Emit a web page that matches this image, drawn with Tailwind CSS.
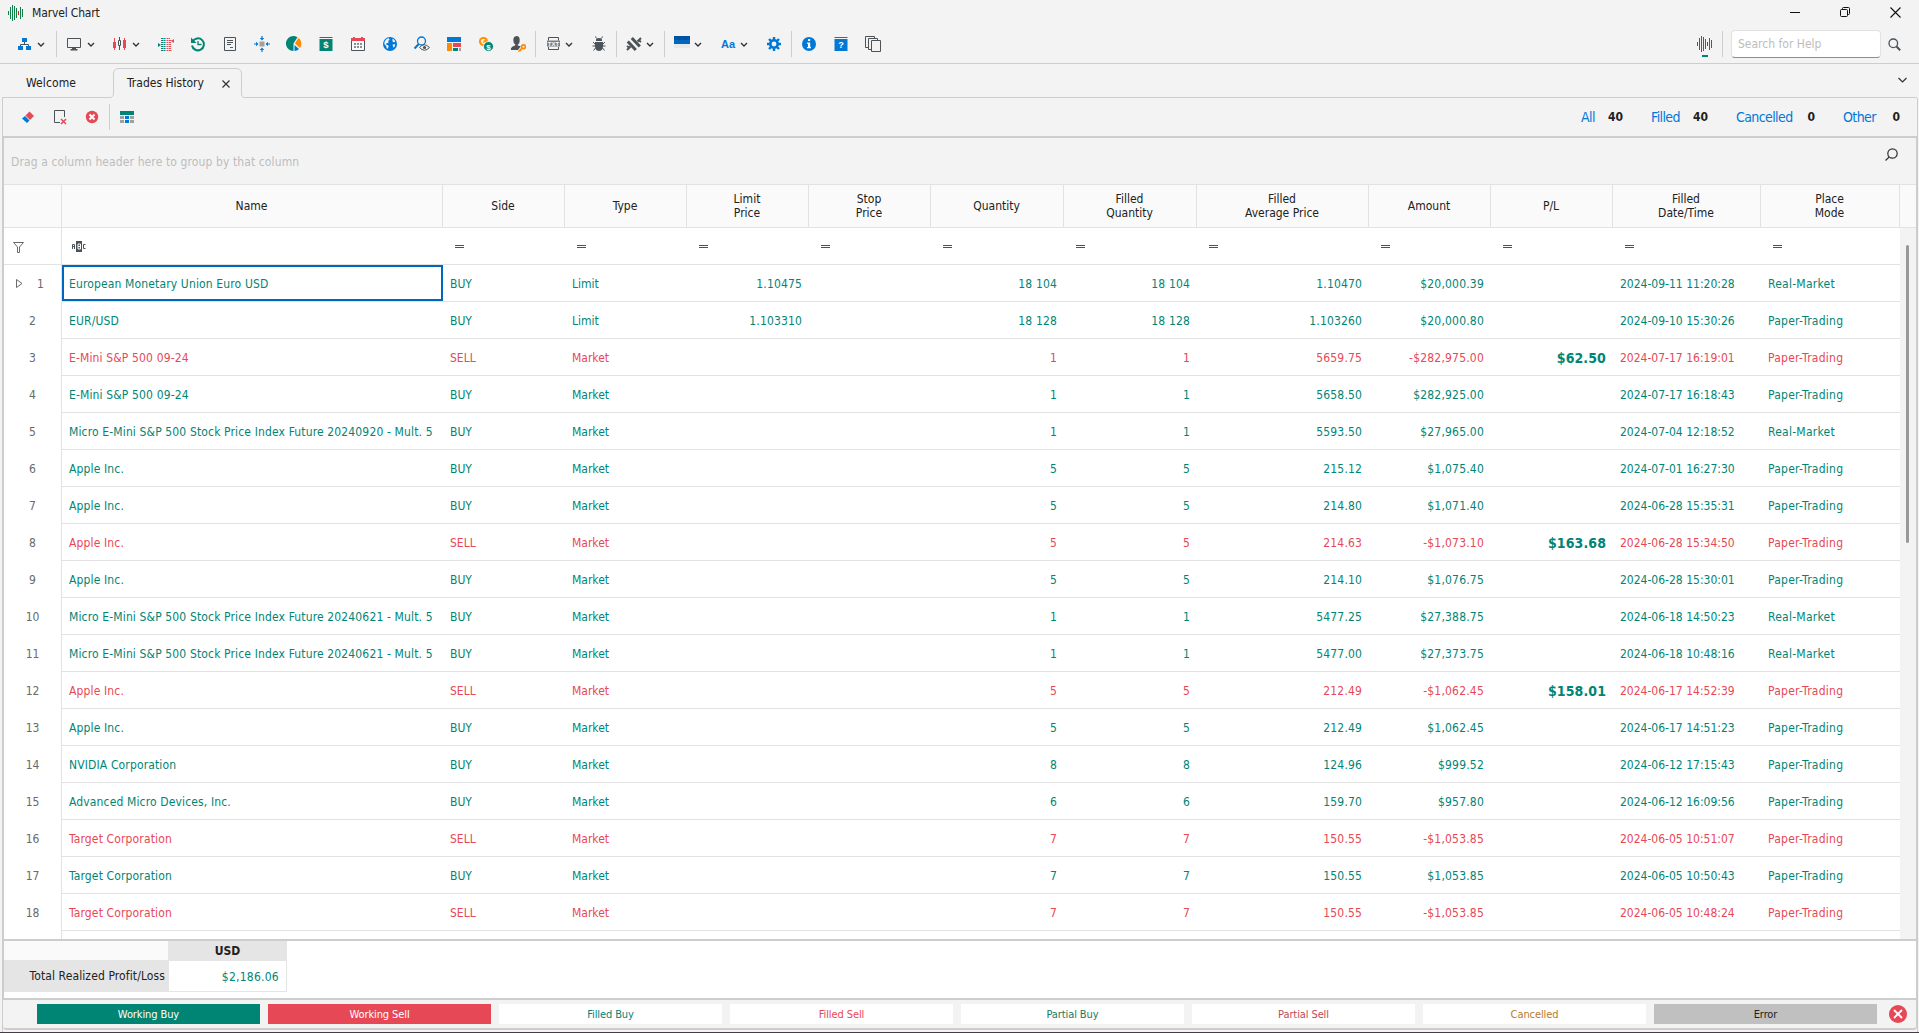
<!DOCTYPE html>
<html lang="en">
<head>
    <meta charset="UTF-8">
    <meta name="viewport" content="width=device-width, initial-scale=1.0">
    <title>Marvel Chart</title>
    <script src="https://cdn.jsdelivr.net/npm/@tailwindcss/browser@4"></script>
</head>
<body class="w-[1919px] h-[1033px] overflow-hidden bg-[#f3f3f3] text-[#212121] text-[12px] font-['DejaVu_Sans_Condensed','Noto_Sans',sans-serif]">
    <!-- Shared icons -->
    <svg class="hidden">
        <symbol id="chev" viewBox="0 0 8 16"><path d="M1 7l3 3 3-3" fill="none" stroke="#333" stroke-width="1.4"/></symbol>
        <symbol id="logo" viewBox="0 0 16 16">
            <path d="M.5 6v4M2.500 2v12M4.500 0v16M6.500 1v14M8.500 3v10M12.500 2v12M14.500 4v8" stroke="#10804a"/>
            <path d="M10.500 6v4" stroke="#c22"/>
        </symbol>
        <symbol id="eq" viewBox="0 0 9 3"><path d="M0 .5h9M0 2.500h9" stroke="#4b5358"/></symbol>
    </svg>

    <div class="flex flex-col h-full">
        <!-- Title bar -->
        <header class="h-[25px] shrink-0 flex items-center pl-2">
            <svg class="w-4 h-4"><use href="#logo"/></svg>
            <h1 class="ml-2 tracking-[-0.15px]">Marvel Chart</h1>
            <div class="ml-auto mr-[18px] flex items-center gap-[39px]">
                <svg class="w-[11px] h-[11px]" viewBox="0 0 11 11"><path d="M0 5.500h10" stroke="#111"/></svg>
                <svg class="w-[11px] h-[11px]" viewBox="0 0 11 11" fill="none" stroke="#111"><rect x=".5" y="2.500" width="7" height="7" rx="1"/><path d="M2.500 2.500V1.500q0-1 1-1h5q1 0 1 1v5q0 1-1 1H8"/></svg>
                <svg class="w-[11px] h-[11px]" viewBox="0 0 11 11"><path d="M.5.5l10 10M10.500.5l-10 10" stroke="#111" stroke-width="1.100"/></svg>
            </div>
        </header>

        <!-- Main toolbar -->
        <div class="h-[39px] shrink-0 flex items-center border-b border-[#cdcdcd] pl-4 pr-[17px] gap-4">
            <div class="flex gap-[5px]">
                <svg class="w-4 h-4" viewBox="0 0 16 16"><path d="M6 2h5v4H6zM2 10h5v4H2zM10 10h5v4h-5z" fill="#0078d7"/><path d="M8.500 6v2M4.500 10V8.500h8V10" fill="none" stroke="#4b5358"/></svg>
                <svg class="w-2 h-4"><use href="#chev"/></svg>
            </div>
            <div class="w-px h-[26px] bg-[#cdcdcd] ml-[-5px] mr-[-7px]"></div>
            <div class="flex gap-[5px]">
                <svg class="w-4 h-4" viewBox="0 0 16 16"><path d="M1.500 2.500h13v9h-13z" fill="none" stroke="#4b5358"/><path d="M6 12h4v1h1.500v1.500h-7V13H6z" fill="#4b5358"/></svg>
                <svg class="w-2 h-4"><use href="#chev"/></svg>
            </div>
            <div class="flex gap-[5px] mr-[2px]">
                <svg class="w-4 h-4" viewBox="0 0 16 16"><path d="M3.500 2v12M13.500 2v12" stroke="#e74856"/><path d="M2 6h3v6H2zM12 4h3v8h-3z" fill="#e74856"/><path d="M8.500 1v3M8.500 10v4M7.500 4.500h2v5h-2z" fill="none" stroke="#4b5358"/></svg>
                <svg class="w-2 h-4"><use href="#chev"/></svg>
            </div>
            <svg class="w-4 h-4" viewBox="0 0 16 16"><path d="M3 2.500h5M3 4.500h5M3 6.500h5M3 8.500h5M3 10.500h5M3 12.500h5M3 14.500h5" stroke="#008575" stroke-dasharray="2 .5"/><path d="M8.500 2.500H12M8.500 4.500H14M8.500 6.500H13M8.500 8.500H13M8.500 10.500H13M8.500 12.500H13M8.500 14.500H14" stroke="#e74856" stroke-dasharray="2 .5"/><path d="M0 7v4l3-2z" fill="#008575"/><path d="M16 3v4l-3-2z" fill="#e74856"/></svg>
            <svg class="w-4 h-4" viewBox="0 0 16 16"><path d="M2.600 5.500A6 6 0 1 1 2 9.500" fill="none" stroke="#008575" stroke-width="2"/><path d="M1 1.500v5.500h5.500z" fill="#008575"/><path d="M8 5v3.500h3.500" fill="none" stroke="#008575" stroke-width="1.300"/></svg>
            <svg class="w-4 h-4" viewBox="0 0 16 16" fill="none" stroke="#4b5358"><path d="M2.500 1.500h11v13h-11z"/><path d="M5 4.500h6M5 6.500h6M5 8.500h4"/><path d="M8 11.500h3" stroke="#0078d7"/></svg>
            <svg class="w-4 h-4" viewBox="0 0 16 16"><path d="M5.500 5.500h5v5h-5z" fill="#a0a0a0"/><path d="M8 0v2.500M8 13.500V16M0 8h2.500M13.500 8H16" stroke="#0078d7" stroke-width="1.200"/><path d="M5.800 2h4.400L8 4.500zM5.800 14h4.400L8 11.500zM2 5.800v4.400L4.500 8zM14 5.800v4.400L11.500 8z" fill="#0078d7"/></svg>
            <svg class="w-4 h-4" viewBox="0 0 16 16"><path d="M7.500 7.500V15A7.500 7.500 0 1 1 11.500 1.200z" fill="#008575"/><path d="M12.500 1.800A7.500 7.500 0 0 1 14 12L9 7.500z" fill="#ff8c00"/><path d="M8.500 9l4.500 4a7.500 7.500 0 0 1-4.500 2z" fill="#0078d7"/></svg>
            <svg class="w-4 h-4" viewBox="0 0 16 16"><path d="M1.500 1h13v1h-13zM1.500 3h13v12h-13z" fill="#008575"/><text x="8" y="12.200" text-anchor="middle" font-size="9.500" font-weight="bold" fill="#fff" font-family="Liberation Sans">$</text></svg>
            <svg class="w-4 h-4" viewBox="0 0 16 16"><path d="M1.500 3.500h13v11h-13z" fill="#fafafa" stroke="#4b5358"/><path d="M1 2h2V1h2v1h6V1h2v1h2v3H1z" fill="#e74856"/><path d="M4 8h8M4 11h8" stroke="#8a8f92" stroke-width="2" stroke-dasharray="2 1"/></svg>
            <svg class="w-4 h-4" viewBox="0 0 16 16"><circle cx="8" cy="8" r="7" fill="#0078d7"/><path d="M4 3.500Q5.500 2.300 7 2.300L7.500 4 6 5l.8 1.300L5 7.500l-1.200-.2.7 1.400 2 .8v1.500l-1 1.800-.8-.4-.5-2.500L2.300 8 2.500 6zM10.500 2.500l2 1.500.8 2-1.500.2L10.500 5.500zM10.500 8.500l2.700-.3-.7 2.800-1.200.5z" fill="#f3f3f3"/></svg>
            <svg class="w-4 h-4" viewBox="0 0 16 16" fill="none"><circle cx="7.500" cy="5" r="4" stroke="#0078d7" stroke-width="1.300"/><path d="M4.800 8L.5 12.500" stroke="#0078d7" stroke-width="2"/><path d="M5.500 11.500q4.500-5.500 10 0-5 5.500-10 0z" fill="#f3f3f3" stroke="#4b5358"/><circle cx="10.500" cy="11.500" r="1.600" fill="#4b5358"/></svg>
            <svg class="w-4 h-4" viewBox="0 0 16 16"><path d="M1 1h14v5H1z" fill="#0078d7"/><path d="M1 7h5v8H1z" fill="#ff8c00"/><path d="M7 7h8v4H7z" fill="#e74856"/><path d="M7 12h5v3H7z" fill="#008575"/><path d="M13 12h2v3h-2z" fill="#a0a0a0"/></svg>
            <svg class="w-4 h-4" viewBox="0 0 16 16" font-family="Liberation Sans" font-weight="bold" fill="#fff"><circle cx="5.500" cy="5.500" r="4.500" fill="#ff8c00"/><text x="3" y="8.400" font-size="8">€</text><circle cx="10.500" cy="10.500" r="5" fill="#008575" stroke="#f3f3f3"/><text x="8.300" y="13.500" font-size="8">$</text></svg>
            <svg class="w-4 h-4" viewBox="0 0 16 16"><path d="M6.500 0q3.200 0 3.200 4T7.800 8.500v1l3 .8L8 14H1q-1-3 4.200-4.500v-1Q3.300 7.500 3.300 4T6.500 0z" fill="#4b5358"/><circle cx="13.500" cy="10.800" r="1.900" fill="none" stroke="#ff8c00" stroke-width="1.700"/><path d="M12.200 12L8.500 15.500M10 13.500l1 1.500" stroke="#ff8c00" stroke-width="1.700"/></svg>
            <div class="w-px h-[26px] bg-[#cdcdcd] ml-[-7px] mr-[-7px]"></div>
            <div class="flex gap-1 mr-[2px]">
                <svg class="w-4 h-4" viewBox="0 0 16 16"><path d="M3.500 4.500v-3h10v3M3.500 11v2.500h10V11" fill="none" stroke="#4b5358"/><path d="M2 4.500h13v6H2z" fill="#7a7f82"/><text x="8.500" y="9.900" text-anchor="middle" font-size="6" font-weight="bold" fill="#fff" font-family="Liberation Sans">TXT</text></svg>
                <svg class="w-2 h-4"><use href="#chev"/></svg>
            </div>
            <svg class="w-4 h-4" viewBox="0 0 16 16"><path d="M5 4q0-2 3-2t3 2v1H5zM4 6h8q1 9-4 9T4 6z" fill="#4b5358"/><path d="M5.500 2.500L4.500.5M10.500 2.500l1-2M4 8L2 6M4 10H1.500M4.500 12L2.500 14.500M12 8l2-2M12 10h2.500M11.500 12l2 2.500" stroke="#4b5358"/></svg>
            <div class="w-px h-[26px] bg-[#cdcdcd] ml-[-7px] mr-[-7px]"></div>
            <div class="flex gap-1">
                <svg class="w-4 h-4" viewBox="0 0 16 16"><path d="M1.800 5.500l8 8.500M5.800 2l8 8.500" stroke="#4b5358" stroke-width="3"/><path d="M1 14l3.500-3.500M11.500 5.500L15 2M1 10l2 1.500M13 4.500l2 1.500" stroke="#4b5358" stroke-width="2"/></svg>
                <svg class="w-2 h-4"><use href="#chev"/></svg>
            </div>
            <div class="w-px h-[26px] bg-[#cdcdcd] ml-[-6px] mr-[-7px]"></div>
            <div class="flex gap-1 mr-[3px]">
                <svg class="w-4 h-4" viewBox="0 0 16 16"><path d="M0 0h16v4H0z" fill="#00539c"/><path d="M0 4h16v4H0z" fill="#0067c0"/><path d="M0 8h16v4H0z" fill="#e9e9e9"/></svg>
                <svg class="w-2 h-4"><use href="#chev"/></svg>
            </div>
            <div class="flex gap-[3px] items-center">
                <span class="w-4 h-4 leading-4 text-[11px] font-bold text-[#0078d7] font-['Liberation_Sans',sans-serif]">Aa</span>
                <svg class="w-2 h-4"><use href="#chev"/></svg>
            </div>
            <svg class="w-4 h-4 ml-[2px]" viewBox="0 0 16 16"><path d="M8 1v3M8 12v3M1 8h3M12 8h3M3 3l2.200 2.200M10.800 10.800L13 13M13 3l-2.200 2.200M5.200 10.800L3 13" stroke="#0078d7" stroke-width="2.400"/><circle cx="8" cy="8" r="3.700" fill="none" stroke="#0078d7" stroke-width="2.600"/></svg>
            <div class="w-px h-[26px] bg-[#cdcdcd] ml-[-7px] mr-[-7px]"></div>
            <svg class="w-4 h-4" viewBox="0 0 16 16"><circle cx="8" cy="8" r="7" fill="#0078d7"/><path d="M7 3h2.200v2H7zM6 6.500h3.200V11H10v1.200H6V11h1V7.700H6z" fill="#fff"/></svg>
            <svg class="w-4 h-4" viewBox="0 0 16 16"><path d="M1.500 1h13v1h-13zM1.500 3h13v12h-13z" fill="#0078d7"/><text x="8" y="12" text-anchor="middle" font-size="9" font-weight="bold" fill="#fff" font-family="Liberation Sans">?</text></svg>
            <svg class="w-4 h-4" viewBox="0 0 16 16" fill="none" stroke="#4b5358"><path d="M3.500 11.500h-3v-11h9v2M6.500 13.500h-3v-11h9v2M6.500 4.500h9v11h-9z"/></svg>

            <div class="ml-auto flex items-center">
                <div class="w-4 h-[26px] flex flex-col items-center pt-[5px] mr-[9px]">
                    <svg class="w-4 h-4 shrink-0"><use href="#logo"/></svg>
                    <div class="w-[6px] h-[2px] mt-[3px] shrink-0 bg-[#008575]"></div>
                </div>
                <div class="w-px h-[26px] bg-[#cdcdcd]"></div>
                <input type="text" placeholder="Search for Help" class="ml-2 w-[150px] h-7 rounded border border-[#e2e2e2] border-b-[#8f8f8f] bg-white px-[6px] placeholder:text-[#bdbdbd]">
                <svg class="w-[13px] h-[13px] ml-[7px] mr-px" viewBox="0 0 13 13"><circle cx="5.300" cy="5.300" r="4.300" fill="none" stroke="#4b5358" stroke-width="1.300"/><path d="M8.500 8.500l3.700 3.700" stroke="#4b5358" stroke-width="2"/></svg>
            </div>
        </div>

        <!-- Document tabs -->
        <div class="h-[34px] shrink-0 flex items-end border-b border-[#cdcdcd] mx-[2px]">
            <div class="w-[108px] h-[29px] pl-6 leading-[30px] tracking-[0.1px]">Welcome</div>
            <div class="relative w-[134px] h-[30px] -mb-px">
                <svg class="absolute left-0 top-0 w-[134px] h-[30px]" viewBox="0 0 134 30"><path d="M0 29.500Q3.500 29.500 3.500 25V6Q3.500.5 9 .5H126Q131.500.5 131.500 6V25Q131.500 29.500 134 29.500V30H0z" fill="#f3f3f3"/><path d="M0 29.500Q3.500 29.500 3.500 25V6Q3.500.5 9 .5H126Q131.500.5 131.500 6V25Q131.500 29.500 134 29.500" fill="none" stroke="#cdcdcd"/></svg>
                <div class="relative flex items-center h-[30px] pl-[17px]">
                    <span class="w-[95px]">Trades History</span>
                    <svg class="w-2 h-2 mt-px" viewBox="0 0 8 8"><path d="M.5.5l7 7M7.500.5l-7 7" stroke="#333" stroke-width="1.200"/></svg>
                </div>
            </div>
            <svg class="ml-auto mr-[10px] mb-[12px] w-[9px] h-[10px]" viewBox="0 0 9 10"><path d="M.5 3l4 4 4-4" fill="none" stroke="#333" stroke-width="1.200"/></svg>
        </div>

        <!-- Trades History page -->
        <div class="flex-1 min-h-0 flex flex-col mx-[2px] mr-px border-l border-r border-[#cdcdcd]">
            <div class="h-[38px] shrink-0 flex items-center pl-[17px] pr-[17px]">
                <svg class="w-4 h-4" viewBox="0 0 16 16"><path d="M9.500 2.500l4.500 4.500-4 4L5.500 6.500z" fill="#e74856"/><path d="M5 7l4.500 4.500L7 14 2 9.500z" fill="#0078d7"/></svg>
                <svg class="w-4 h-4 ml-4" viewBox="0 0 16 16"><path d="M12.500 8V1.500h-10v12H8" fill="none" stroke="#4b5358"/><path d="M9 10l5 5M14 10l-5 5" stroke="#e74856" stroke-width="1.500"/></svg>
                <svg class="w-4 h-4 ml-4" viewBox="0 0 16 16"><circle cx="8" cy="8" r="6.200" fill="#e74856"/><path d="M5.500 5.500l5 5M10.500 5.500l-5 5" stroke="#fff" stroke-width="2"/></svg>
                <div class="w-px h-[26px] bg-[#cdcdcd] ml-[9px]"></div>
                <svg class="w-4 h-4 ml-[9px]" viewBox="0 0 16 16"><path d="M1 2h14v4H1z" fill="#008575"/><path d="M1 7h4v3H1zM11 7h4v3h-4zM1 11h4v3H1zM11 11h4v3h-4z" fill="#a0a0a0"/><path d="M6 7h4v3H6zM6 11h4v3H6z" fill="#0078d7"/></svg>
                <div class="ml-auto flex gap-7 text-[14px] tracking-[-0.6px] text-[#0078d7]">
                    <div class="w-[42px] flex justify-between items-center">All <b class="text-[12px] tracking-normal text-[#212121]">40</b></div>
                    <div class="w-[57px] flex justify-between items-center">Filled <b class="text-[12px] tracking-normal text-[#212121]">40</b></div>
                    <div class="w-[79px] flex justify-between items-center">Cancelled <b class="text-[12px] tracking-normal text-[#212121]">0</b></div>
                    <div class="w-[57px] flex justify-between items-center">Other <b class="text-[12px] tracking-normal text-[#212121]">0</b></div>
                </div>
            </div>

            <!-- Grid -->
            <section class="h-[805px] shrink-0 flex flex-col border-t-2 border-b-2 border-l border-r border-[#cdcdcd]">
                <div class="h-[46px] shrink-0 flex justify-between pl-[7px] pr-[18px] pt-[10px] text-[#bdbdbd]">
                    <span class="leading-7 tracking-[0.11px]">Drag a column header here to group by that column</span>
                    <svg class="w-[13px] h-[13px]" viewBox="0 0 13 13" fill="none" stroke="#333" stroke-width="1.200"><circle cx="7.500" cy="5.500" r="4.700"/><path d="M4.200 9L.5 12.500"/></svg>
                </div>
                <div id="head" class="h-11 shrink-0 grid grid-cols-[58px_381px_122px_122px_122px_122px_133px_133px_172px_122px_122px_148px_139px_1fr] border-t border-b border-[#e2e2e2] bg-[#fafafa] text-center leading-[14px]"></div>
                <div class="flex-1 min-h-0 flex">
                    <div class="w-[1896px] overflow-hidden bg-white">
                        <div id="filters" class="h-[37px] grid grid-cols-[58px_381px_122px_122px_122px_122px_133px_133px_172px_122px_122px_148px_139px] border-b border-[#e2e2e2]"></div>
                        <div id="rows"></div>
                    </div>
                    <div class="flex-1 pt-[17px] pl-[6px]">
                        <div class="w-[3px] h-[298px] rounded-full bg-[#999]"></div>
                    </div>
                </div>
            </section>

            <!-- Totals -->
            <section class="h-[59px] shrink-0 flex bg-white border-b-2 border-l border-r border-[#cdcdcd]">
                <div class="w-[164px] flex flex-col">
                    <div class="h-[19px] bg-[#fafafa]"></div>
                    <div class="h-8 bg-[#e5e5e5] text-right leading-8 pr-[3px] tracking-[0.11px]">Total Realized Profit/Loss</div>
                </div>
                <div class="w-[119px]">
                    <div class="h-5 bg-[#e5e5e5] text-center font-bold leading-5">USD</div>
                    <div class="h-[31px] border-l border-r border-b border-[#e5e5e5] text-right leading-[32px] pr-[7px] tracking-[0.25px] text-[#008575]">$2,186.06</div>
                </div>
            </section>

            <!-- Legend -->
            <footer class="h-[30px] shrink-0 flex items-start pt-1 gap-2 pl-[34px] border-b-2 border-r border-[#cdcdcd] rounded-b text-[11px] text-center leading-[21px] tracking-[-0.1px]">
                <div class="w-[223px] h-5 bg-[#008575] text-white">Working Buy</div>
                <div class="w-[223px] h-5 bg-[#e74856] text-white">Working Sell</div>
                <div class="w-[223px] h-5 bg-white text-[#008575]">Filled Buy</div>
                <div class="w-[223px] h-5 bg-white text-[#e74856]">Filled Sell</div>
                <div class="w-[223px] h-5 bg-white text-[#1a7a60]">Partial Buy</div>
                <div class="w-[223px] h-5 bg-white text-[#c04a58]">Partial Sell</div>
                <div class="w-[223px] h-5 bg-white text-[#b87a2c]">Cancelled</div>
                <div class="w-[223px] h-5 bg-[#c0c0c0]">Error</div>
                <svg class="w-[18px] h-[18px] ml-1 mt-px" viewBox="0 0 18 18"><circle cx="9" cy="9" r="9" fill="#e74856"/><path d="M5 5l8 8M13 5l-8 8" stroke="#fff" stroke-width="1.800"/></svg>
            </footer>
            <div class="h-[2px] shrink-0"></div>
        </div>
        <div class="h-px shrink-0 bg-[#453c46]"></div>
    </div>

    <script>
        const columns = ['', 'Name', 'Side', 'Type', 'Limit<br>Price', 'Stop<br>Price', 'Quantity', 'Filled<br>Quantity',
            'Filled<br>Average Price', 'Amount', 'P/L', 'Filled<br>Date/Time', 'Place<br>Mode'];

        // name, side, type, limit, quantity, average price, amount, P/L, date, mode
        const trades = [
            ['European Monetary Union Euro USD', 'BUY', 'Limit', '1.10475', '18 104', '1.10470', '$20,000.39', '', '2024-09-11 11:20:28', 'Real-Market'],
            ['EUR/USD', 'BUY', 'Limit', '1.103310', '18 128', '1.103260', '$20,000.80', '', '2024-09-10 15:30:26', 'Paper-Trading'],
            ['E-Mini S&amp;P 500 09-24', 'SELL', 'Market', '', '1', '5659.75', '-$282,975.00', '$62.50', '2024-07-17 16:19:01', 'Paper-Trading'],
            ['E-Mini S&amp;P 500 09-24', 'BUY', 'Market', '', '1', '5658.50', '$282,925.00', '', '2024-07-17 16:18:43', 'Paper-Trading'],
            ['Micro E-Mini S&amp;P 500 Stock Price Index Future 20240920 - Mult. 5', 'BUY', 'Market', '', '1', '5593.50', '$27,965.00', '', '2024-07-04 12:18:52', 'Real-Market'],
            ['Apple Inc.', 'BUY', 'Market', '', '5', '215.12', '$1,075.40', '', '2024-07-01 16:27:30', 'Paper-Trading'],
            ['Apple Inc.', 'BUY', 'Market', '', '5', '214.80', '$1,071.40', '', '2024-06-28 15:35:31', 'Paper-Trading'],
            ['Apple Inc.', 'SELL', 'Market', '', '5', '214.63', '-$1,073.10', '$163.68', '2024-06-28 15:34:50', 'Paper-Trading'],
            ['Apple Inc.', 'BUY', 'Market', '', '5', '214.10', '$1,076.75', '', '2024-06-28 15:30:01', 'Paper-Trading'],
            ['Micro E-Mini S&amp;P 500 Stock Price Index Future 20240621 - Mult. 5', 'BUY', 'Market', '', '1', '5477.25', '$27,388.75', '', '2024-06-18 14:50:23', 'Real-Market'],
            ['Micro E-Mini S&amp;P 500 Stock Price Index Future 20240621 - Mult. 5', 'BUY', 'Market', '', '1', '5477.00', '$27,373.75', '', '2024-06-18 10:48:16', 'Real-Market'],
            ['Apple Inc.', 'SELL', 'Market', '', '5', '212.49', '-$1,062.45', '$158.01', '2024-06-17 14:52:39', 'Paper-Trading'],
            ['Apple Inc.', 'BUY', 'Market', '', '5', '212.49', '$1,062.45', '', '2024-06-17 14:51:23', 'Paper-Trading'],
            ['NVIDIA Corporation', 'BUY', 'Market', '', '8', '124.96', '$999.52', '', '2024-06-12 17:15:43', 'Paper-Trading'],
            ['Advanced Micro Devices, Inc.', 'BUY', 'Market', '', '6', '159.70', '$957.80', '', '2024-06-12 16:09:56', 'Paper-Trading'],
            ['Target Corporation', 'SELL', 'Market', '', '7', '150.55', '-$1,053.85', '', '2024-06-05 10:51:07', 'Paper-Trading'],
            ['Target Corporation', 'BUY', 'Market', '', '7', '150.55', '$1,053.85', '', '2024-06-05 10:50:43', 'Paper-Trading'],
            ['Target Corporation', 'SELL', 'Market', '', '7', '150.55', '-$1,053.85', '', '2024-06-05 10:48:24', 'Paper-Trading'],
        ];

        document.getElementById('head').innerHTML = columns.map(c =>
            `<div class="flex items-center justify-center border-r border-[#e2e2e2]"><span class="-ml-px">${c}</span></div>`).join('');

        document.getElementById('filters').innerHTML = columns.map((c, i) => {
            if (i === 0) return `<div class="border-r border-[#e2e2e2] pl-[9px] pt-[14px]"><svg class="w-[11px] h-[11px]" viewBox="0 0 11 11"><path d="M.5.5h10L6.500 5v5.500h-2V5z" fill="none" stroke="#6a6a6a"/></svg></div>`;
            if (i === 1) return `<div class="pl-[10px] pt-[13px]"><svg class="w-[15px] h-[11px]" viewBox="0 0 15 11" fill="none" stroke="#4b5358"><path d="M4 0h6v11H4z" fill="#4b5358" stroke="none"/><path d="M.5 8V3.500h2V8M.5 5.500h2M13.500 3.500h-2v4h2"/><path d="M6 3h2.500v5H6zM6 5.500h2" stroke="#fff"/></svg></div>`;
            return `<div class="pl-3 pt-[17px]"><svg class="w-[9px] h-[3px]"><use href="#eq"/></svg></div>`;
        }).join('');

        document.getElementById('rows').innerHTML = trades.map((t, i) => {
            const [name, side, type, limit, qty, avg, amount, pl, date, mode] = t;
            const color = side === 'BUY' ? 'text-[#008575]' : 'text-[#e74856]';
            const box = i === 0 ? 'outline-2 -outline-offset-2 outline-[#0067c0]' : '';
            const num = i === 0
                ? `<svg class="w-[7px] h-[9px] ml-3 mr-[14px]" viewBox="0 0 7 9"><path d="M.5.5v8l5.500-4z" fill="none" stroke="#6a6a6a"/></svg>1`
                : `<span class="w-[57px] text-center">${i + 1}</span>`;
            return `<div class="flex h-[37px] ${color}">
                <div class="w-[58px] flex items-center border-r border-[#e2e2e2] text-[#6a6a6a]">${num}</div>
                <div class="grid grid-cols-[381px_122px_122px_122px_122px_133px_133px_172px_122px_122px_148px_139px] border-b border-[#e2e2e2] leading-[38px]">
                    <div class="pl-[7px] h-[36px] whitespace-nowrap tracking-[0.14px] ${box}">${name}</div>
                    <div class="pl-[7px]">${side}</div>
                    <div class="pl-[7px]">${type}</div>
                    <div class="pr-[7px] text-right tracking-[0.15px]">${limit}</div>
                    <div></div>
                    <div class="pr-[7px] text-right tracking-[0.15px]">${qty}</div>
                    <div class="pr-[7px] text-right tracking-[0.15px]">${qty}</div>
                    <div class="pr-[7px] text-right tracking-[0.15px]">${avg}</div>
                    <div class="pr-[7px] text-right tracking-[0.2px]">${amount}</div>
                    <div class="pr-[7px] text-right text-[14px] font-bold tracking-[0.1px] text-[#008575]">${pl}</div>
                    <div class="pl-[7px] whitespace-nowrap">${date}</div>
                    <div class="pl-[7px] tracking-[0.25px]">${mode}</div>
                </div>
            </div>`;
        }).join('') + '<div class="w-[58px] h-[37px] border-r border-[#e2e2e2]"></div>';
    </script>
</body>
</html>
